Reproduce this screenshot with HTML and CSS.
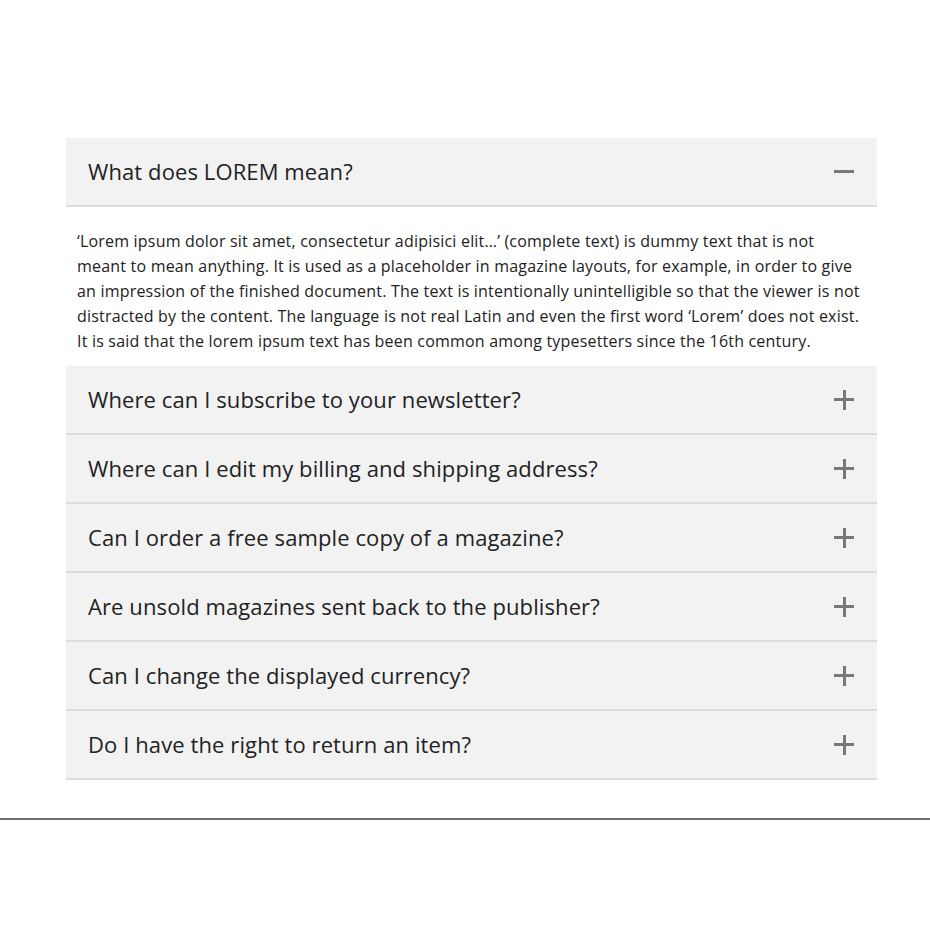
FILE: index.html
```html
<!DOCTYPE html>
<html lang="en">
<head>
<meta charset="utf-8">
<title>FAQ</title>
<link rel="stylesheet" href="styles.css">
</head>
<body>
<main class="page">
  <section class="accordion">
    <div class="item open">
      <div class="head"><span class="q">What does LOREM mean?</span><span class="icon minus"></span></div>
      <div class="body"><p>‘Lorem ipsum dolor sit amet, consectetur adipisici elit…’ (complete text) is dummy text that is not meant to mean anything. It is used as a placeholder in magazine layouts, for example, in order to give an impression of the finished document. The text is intentionally unintelligible so that the viewer is not distracted by the content. The language is not real Latin and even the first word ‘Lorem’ does not exist. It is said that the lorem ipsum text has been common among typesetters since the 16th century.</p></div>
    </div>
    <div class="item"><div class="head"><span class="q">Where can I subscribe to your newsletter?</span><span class="icon plus"></span></div></div>
    <div class="item"><div class="head"><span class="q">Where can I edit my billing and shipping address?</span><span class="icon plus"></span></div></div>
    <div class="item"><div class="head"><span class="q">Can I order a free sample copy of a magazine?</span><span class="icon plus"></span></div></div>
    <div class="item"><div class="head"><span class="q">Are unsold magazines sent back to the publisher?</span><span class="icon plus"></span></div></div>
    <div class="item"><div class="head"><span class="q">Can I change the displayed currency?</span><span class="icon plus"></span></div></div>
    <div class="item"><div class="head"><span class="q">Do I have the right to return an item?</span><span class="icon plus"></span></div></div>
  </section>
  <hr class="rule">
</main>
</body>
</html>
```
FILE: styles.css
```css
* { box-sizing: border-box; }
html, body { margin: 0; padding: 0; background: #fff; }
body { font-family: "Open Sans", "Noto Sans", sans-serif; color: #222; }
.page { padding-top: 138px; }
.accordion { width: 811px; margin-left: 66px; }
.head {
  height: 69px;
  background: #f2f2f2;
  border-bottom: 2px solid #dcdcdc;
  display: flex;
  align-items: center;
  justify-content: space-between;
  padding: 0 23px 0 22px;
}
.q { font-size: 22px; letter-spacing: 0.1px; line-height: 1; color: #222; position: relative; top: -1px; }
.icon { position: relative; width: 20px; height: 20px; flex: none; }
.icon::before, .icon::after {
  content: ""; position: absolute; background: #787878;
}
.icon::before { left: 0; right: 0; top: 8.5px; height: 3px; }
.plus::after { top: 0; bottom: 0; left: 8.5px; width: 3px; }
.minus::after { display: none; }
.body { padding: 22px 11px 12px 11px; }
.body p { margin: 0; font-size: 16px; letter-spacing: 0.2px; line-height: 25px; color: #222; }
.rule { margin: 38px 0 0 0; border: 0; height: 2px; background: #6f6f6f; }
```
